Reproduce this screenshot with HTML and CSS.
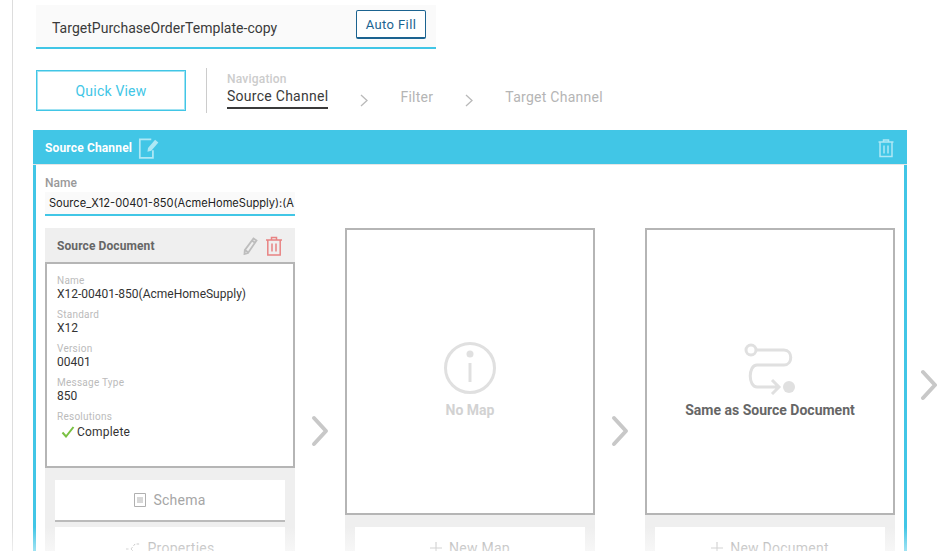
FILE: index.html
```html
<!DOCTYPE html>
<html lang="en">
<head>
    <meta charset="UTF-8">
    <title>Target Purchase Order Template</title>
    <link rel="stylesheet" href="styles.css">
</head>
<body>
    <div class="page">
        <div class="template-field">
            <span class="template-name">TargetPurchaseOrderTemplate-copy</span>
            <button class="auto-fill">Auto Fill</button>
        </div>

        <div class="toolbar">
            <button class="quick-view">Quick View</button>
            <div class="nav">
                <div class="nav-title">Navigation</div>
                <div class="nav-steps">
                    <span class="nav-step active">Source Channel</span>
                    <svg class="nav-arrow" viewBox="0 0 10 14"><path d="M2 2l6 5.500L2 13"/></svg>
                    <span class="nav-step">Filter</span>
                    <svg class="nav-arrow" viewBox="0 0 10 14"><path d="M2 2l6 5.500L2 13"/></svg>
                    <span class="nav-step">Target Channel</span>
                </div>
            </div>
        </div>

        <div class="channel">
            <div class="channel-head">
                <span class="channel-title">Source Channel</span>
                <svg class="head-edit" viewBox="0 0 22 22">
                    <path d="M14 3H3.500v17h12v-7"/>
                    <path class="solid" d="M17.500 3.500l3 2.500-6.500 7.500-3.500 1 .5-3.500z"/>
                </svg>
                <svg class="head-trash" viewBox="0 0 18 20">
                    <path d="M1.500 4h15M6.500 4V2h5v2M3 4v14.500h12V4M7 7.500v8M11 7.500v8"/>
                </svg>
            </div>
            <div class="channel-body">
                <label class="name-label">Name</label>
                <div class="name-input">Source_X12-00401-850(AcmeHomeSupply):(A</div>

                <div class="columns">
                    <div class="col">
                        <div class="col-head">
                            <span>Source Document</span>
                            <svg class="icon-pencil" viewBox="0 0 16 18">
                                <path d="M11.500 1.500l3 2L6 16l-3.500 1 .3-3.800zM3 13l3 2.200M10 3.500l3 2.200"/>
                            </svg>
                            <svg class="icon-trash" viewBox="0 0 18 20">
                                <path d="M1 4h16M6.500 4V1.500h5V4M2.800 4v15h12.400V4M7 7.500v8M11 7.500v8"/>
                            </svg>
                        </div>
                        <div class="card doc">
                            <div class="field-label">Name</div>
                            <div class="field-value">X12-00401-850(AcmeHomeSupply)</div>
                            <div class="field-label">Standard</div>
                            <div class="field-value">X12</div>
                            <div class="field-label">Version</div>
                            <div class="field-value">00401</div>
                            <div class="field-label">Message Type</div>
                            <div class="field-value">850</div>
                            <div class="field-label">Resolutions</div>
                            <div class="field-value status">
                                <svg class="icon-check" viewBox="0 0 14 12"><path d="M1.500 6.500l3.500 4L12.500 1"/></svg>
                                Complete
                            </div>
                        </div>
                        <div class="col-actions">
                            <div class="action underlined">
                                <svg class="icon-schema" viewBox="0 0 12 14">
                                    <path d="M.5.500h11v13H.5zM3 5h6M3 7h6M3 9h6"/>
                                </svg>
                                Schema
                            </div>
                            <div class="action">
                                <svg class="icon-props" viewBox="0 0 15 14">
                                    <path d="M0 8h3M5 8l4-5h5M5 8l4 4h5" stroke-dasharray="2.500 1.500"/>
                                </svg>
                                Properties
                            </div>
                        </div>
                    </div>

                    <svg class="col-arrow" viewBox="0 0 20 32"><path d="M3 3l12 13L3 29"/></svg>

                    <div class="col">
                        <div class="card empty">
                            <svg class="icon-info" viewBox="0 0 54 54">
                                <circle cx="27" cy="27" r="24.500"/>
                                <path d="M27 22v19"/>
                                <circle class="solid" cx="27" cy="13" r="3.500"/>
                            </svg>
                            <div class="empty-text muted">No Map</div>
                        </div>
                        <div class="col-actions">
                            <div class="action">
                                <svg class="icon-plus" viewBox="0 0 12 12"><path d="M6 0v12M0 6h12"/></svg>
                                New Map
                            </div>
                        </div>
                    </div>

                    <svg class="col-arrow" viewBox="0 0 20 32"><path d="M3 3l12 13L3 29"/></svg>

                    <div class="col">
                        <div class="card empty">
                            <svg class="icon-route" viewBox="0 0 54 54">
                                <circle cx="8" cy="9" r="5"/>
                                <path d="M13 9h28c9 0 9 15 0 15H14c-9 0-9 22 0 22h21M29 39l7 7-7 7"/>
                                <circle class="solid" cx="46" cy="46" r="6"/>
                            </svg>
                            <div class="empty-text">Same as Source Document</div>
                        </div>
                        <div class="col-actions">
                            <div class="action">
                                <svg class="icon-plus" viewBox="0 0 12 12"><path d="M6 0v12M0 6h12"/></svg>
                                New Document
                            </div>
                        </div>
                    </div>
                </div>
            </div>
            <svg class="channel-next" viewBox="0 0 20 32"><path d="M3 3l12 13L3 29"/></svg>
        </div>
    </div>
    <div class="bottom-fade"></div>
</body>
</html>
```

FILE: styles.css
```css
html, body {
    height: 100%;
    margin: 0;
    overflow: hidden;
}
body {
    background: #fff;
    color: #333;
    font-family: Roboto, "Noto Sans", sans-serif;
    position: relative;
}
button {
    font-family: inherit;
    background: #fff;
    cursor: pointer;
}
svg {
    fill: none;
    stroke: currentColor;
    flex: none;
}
svg .solid {
    fill: currentColor;
    stroke: none;
}
.page {
    margin-left: 12px;
    padding: 5px 0 0 20px;
    border-left: 1px solid #ddd;
    min-height: 100%;
    box-sizing: border-box;
}

/* top field */
.template-field {
    display: flex;
    align-items: center;
    justify-content: space-between;
    width: 400px;
    height: 44px;
    margin-left: 3px;
    padding: 0 10px 0 16px;
    box-sizing: border-box;
    background: #fafafa;
    border-bottom: 2px solid #41c6e6;
}
.template-name {
    font-size: 14px;
    letter-spacing: .03px;
    color: #3a3a3a;
    padding-top: 4px;
}
.auto-fill {
    width: 70px;
    height: 29px;
    padding: 0;
    margin-bottom: 3px;
    font-size: 13px;
    letter-spacing: .4px;
    color: #1b6390;
    border: 1px solid #1b6390;
    border-bottom-width: 2px;
    border-radius: 2px;
}

/* quick view + navigation */
.toolbar {
    display: flex;
    align-items: center;
    margin: 19px 0 17px 3px;
}
.quick-view {
    width: 150px;
    height: 41px;
    padding: 0;
    font-size: 14px;
    letter-spacing: .2px;
    color: #41c6e6;
    border: 1px solid #41c6e6;
    box-shadow: inset 0 0 0 1px rgba(65, 198, 230, .5);
}
.nav {
    height: 45px;
    margin-left: 20px;
    padding-left: 20px;
    border-left: 1px solid #ccc;
    box-sizing: border-box;
}
.nav-title {
    font-size: 12px;
    font-weight: 500;
    line-height: 14px;
    letter-spacing: .2px;
    margin-top: 4px;
    color: #ccc;
}
.nav-steps {
    display: flex;
    align-items: center;
}
.nav-step {
    font-size: 14px;
    letter-spacing: .27px;
    line-height: 21px;
    color: #b5b5b5;
}
.nav-step.active {
    color: #3a3a3a;
    border-bottom: 2px solid #3a3a3a;
}
.nav-arrow {
    width: 10px;
    height: 14px;
    margin: 4px 31px 0;
    color: #b9b9b9;
    stroke-width: 1.300;
}

/* channel panel */
.channel {
    position: relative;
    width: 874px;
    box-sizing: border-box;
    border: 3px solid #41c6e6;
    border-top: 0;
}
.channel-head {
    display: flex;
    align-items: center;
    height: 35px;
    margin: 0 -3px;
    padding: 1px 12px 0;
    background: #41c6e6;
    border-bottom: 1px solid #e6e6e6;
    box-sizing: border-box;
    color: #aee8f5;
}
.channel-title {
    font-size: 12px;
    font-weight: 700;
    letter-spacing: .15px;
    color: #fff;
}
.head-edit {
    width: 24px;
    height: 24px;
    margin-left: 4px;
    stroke-width: 1.600;
}
.head-trash {
    width: 18px;
    height: 20px;
    margin-left: auto;
    stroke-width: 1.500;
}
.channel-body {
    padding: 11px 9px 0;
}
.name-label {
    display: block;
    font-size: 12px;
    font-weight: 500;
    line-height: 14px;
    color: #999;
}
.name-input {
    width: 250px;
    height: 24px;
    margin-top: 2px;
    padding-left: 4px;
    box-sizing: border-box;
    background: #fafafa;
    border-bottom: 2px solid #41c6e6;
    font-family: Inter, Roboto, sans-serif;
    font-size: 11.100px;
    line-height: 23px;
    white-space: nowrap;
    overflow: hidden;
    color: #222;
}

/* three columns */
.columns {
    display: flex;
    align-items: flex-start;
    margin-top: 12px;
}
.col {
    width: 250px;
    background: #efefef;
}
.col-head {
    display: flex;
    align-items: center;
    height: 34px;
    padding: 1px 12px 0;
    box-sizing: border-box;
    font-size: 12px;
    font-weight: 700;
    letter-spacing: .1px;
    color: #666;
}
.col-head span {
    margin-right: auto;
}
.icon-pencil {
    width: 16px;
    height: 18px;
    color: #bdbdbd;
    stroke-width: 1.800;
}
.icon-trash {
    width: 18px;
    height: 20px;
    margin-left: 7px;
    color: #e88383;
    stroke-width: 1.500;
}
.card {
    box-sizing: border-box;
    background: #fff;
    border: 2px solid #b5b5b5;
}
.doc {
    height: 206px;
    padding: 11px 10px 0;
}
.field-label {
    font-size: 10px;
    line-height: 12px;
    letter-spacing: .25px;
    color: #bbb;
}
.field-value {
    font-size: 12px;
    line-height: 14px;
    color: #333;
    margin-bottom: 8px;
}
.status {
    display: flex;
    align-items: center;
    margin-top: 2px;
    padding-left: 4px;
    letter-spacing: .2px;
}
.icon-check {
    width: 14px;
    height: 12px;
    margin-right: 2px;
    color: #7ac143;
    stroke-width: 2;
}
.empty {
    height: 287px;
    padding-top: 111px;
    text-align: center;
}
.empty svg {
    display: block;
    width: 54px;
    height: 54px;
    margin: 0 auto;
    color: #e0e0e0;
    stroke-width: 3;
}
.empty-text {
    margin-top: 7px;
    font-size: 14px;
    font-weight: 700;
    color: #666;
}
.empty-text.muted {
    color: #d2d2d2;
}
.col-actions {
    padding: 12px 10px 0;
}
.action {
    display: flex;
    align-items: center;
    justify-content: center;
    height: 42px;
    margin-bottom: 5px;
    background: #fff;
    font-size: 14px;
    letter-spacing: .25px;
    color: #a6a6a6;
    box-sizing: border-box;
}
.action.underlined {
    border-bottom: 2px solid #bbb;
}
.action svg {
    margin-right: 7px;
    color: #b0b0b0;
}
.icon-schema {
    width: 12px;
    height: 14px;
}
.icon-props {
    width: 15px;
    height: 14px;
}
.icon-plus {
    width: 12px;
    height: 12px;
}
.col-arrow {
    width: 20px;
    height: 32px;
    margin: 187px 14px 0 16px;
    color: #c8c8c8;
    stroke-width: 4;
    stroke-linecap: round;
    stroke-linejoin: round;
}
.channel-next {
    position: absolute;
    left: 884px;
    top: 239px;
    width: 20px;
    height: 32px;
    color: #c8c8c8;
    stroke-width: 4;
    stroke-linecap: round;
    stroke-linejoin: round;
}
.bottom-fade {
    position: absolute;
    left: 0;
    right: 0;
    bottom: 0;
    height: 24px;
    background: linear-gradient(rgba(255,255,255,0), rgba(255,255,255,.5));
}
```
